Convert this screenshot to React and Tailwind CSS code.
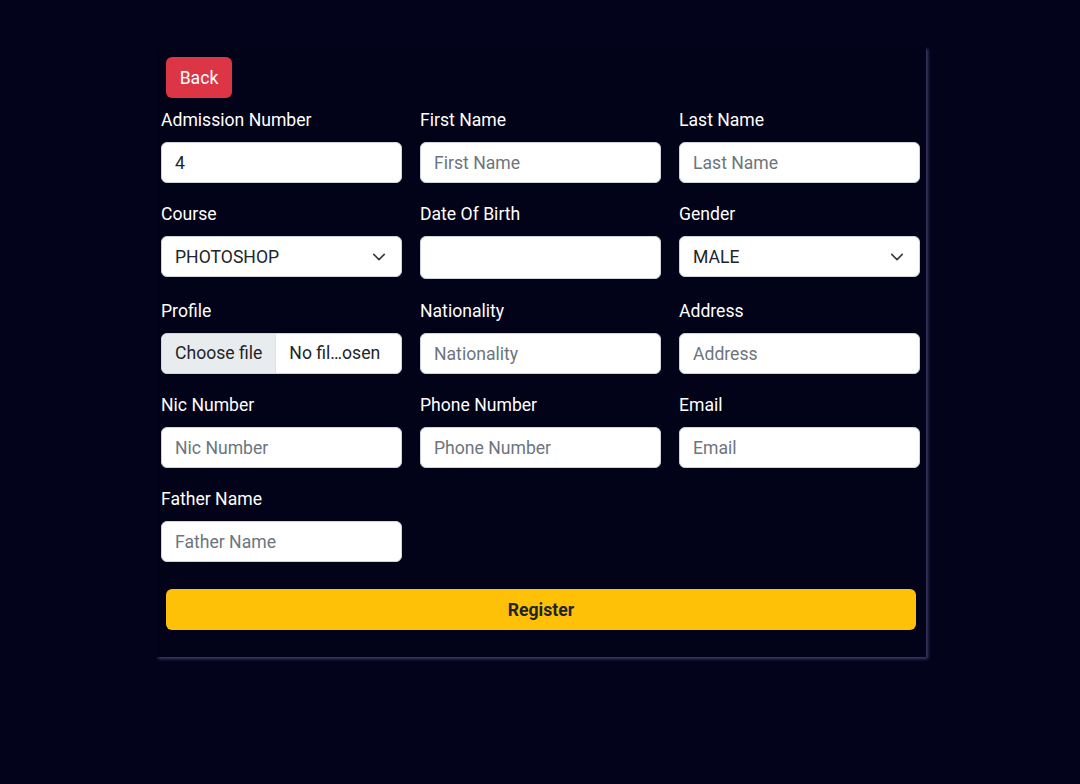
import { useState } from "react";

const font = { fontFamily: "Roboto, 'Noto Sans', sans-serif" };

const Field = ({ label, children }) => (
    <div className="flex flex-col">
        <label className="text-[17.6px] leading-[29px] text-white mb-[7px]">{label}</label>
        {children}
    </div>
);

const TextInput = ({ placeholder, value, onChange, type = "text", tall }) => (
    <input
        type={type}
        placeholder={placeholder}
        value={value}
        onChange={onChange}
        className={`w-full ${tall ? "h-[43px] mb-[1px]" : "h-[41px]"} rounded-[6px] border border-[#ced4da] bg-white px-[13px] text-[17.6px] text-[#212529] placeholder:text-[#6c757d] outline-none`}
    />
);

const Chevron = () => (
    <svg className="absolute right-[16px] top-1/2 -translate-y-1/2 pointer-events-none" width="14" height="14" viewBox="0 0 16 16" fill="none">
        <path d="M2 5l6 6 6-6" stroke="#343a40" strokeWidth="1.8" strokeLinecap="round" strokeLinejoin="round" />
    </svg>
);

const SelectInput = ({ value, options }) => (
    <div className="relative">
        <select
            defaultValue={value}
            className="w-full h-[41px] appearance-none rounded-[6px] border border-[#ced4da] bg-white pl-[13px] pr-[40px] pt-[1px] text-[17.6px] text-[#212529] outline-none"
        >
            {options.map((o) => (
                <option key={o}>{o}</option>
            ))}
        </select>
        <Chevron />
    </div>
);

const FileInput = () => (
    <div className="flex h-[41px] w-full overflow-hidden rounded-[6px] border border-[#ced4da] bg-white text-[17.6px] text-[#212529]">
        <span className="flex items-center bg-[#e9ecef] px-[13px] border-r border-[#dee2e6]">Choose file</span>
        <span className="flex items-center px-[13px]">No fil…osen</span>
    </div>
);

const App = () => {
    const [admission, setAdmission] = useState("4");

    return (
        <div className="min-h-[784px] bg-[#04031c]" style={font}>
            <div className="pt-[47px] pl-[156px]">
                <div className="w-[770px] bg-[#020218] px-[10px] pt-[10px] pb-[27px] shadow-[2px_2px_3px_rgba(130,130,190,0.45)]">
                    <button className="h-[41px] w-[66px] rounded-[6px] bg-[#dc3545] pt-[2px] text-[17.6px] text-white">Back</button>

                    <div className="mt-[8px] ml-[-5px] grid grid-cols-[241px_241px_241px] gap-x-[18px] gap-y-[17px]">
                        <Field label="Admission Number">
                            <TextInput value={admission} onChange={(e) => setAdmission(e.target.value)} />
                        </Field>
                        <Field label="First Name">
                            <TextInput placeholder="First Name" />
                        </Field>
                        <Field label="Last Name">
                            <TextInput placeholder="Last Name" />
                        </Field>

                        <Field label="Course">
                            <SelectInput value="PHOTOSHOP" options={["PHOTOSHOP", "JAVA", "PYTHON"]} />
                        </Field>
                        <Field label="Date Of Birth">
                            <TextInput tall />
                        </Field>
                        <Field label="Gender">
                            <SelectInput value="MALE" options={["MALE", "FEMALE"]} />
                        </Field>

                        <Field label="Profile">
                            <FileInput />
                        </Field>
                        <Field label="Nationality">
                            <TextInput placeholder="Nationality" />
                        </Field>
                        <Field label="Address">
                            <TextInput placeholder="Address" />
                        </Field>

                        <Field label="Nic Number">
                            <TextInput placeholder="Nic Number" />
                        </Field>
                        <Field label="Phone Number">
                            <TextInput placeholder="Phone Number" />
                        </Field>
                        <Field label="Email">
                            <TextInput placeholder="Email" />
                        </Field>

                        <Field label="Father Name">
                            <TextInput placeholder="Father Name" />
                        </Field>
                    </div>

                    <button className="mt-[27px] h-[41px] w-full rounded-[6px] bg-[#ffc107] pt-[2px] text-[17.6px] font-bold text-[#212529]">
                        Register
                    </button>
                </div>
            </div>
        </div>
    );
};

export default App;
